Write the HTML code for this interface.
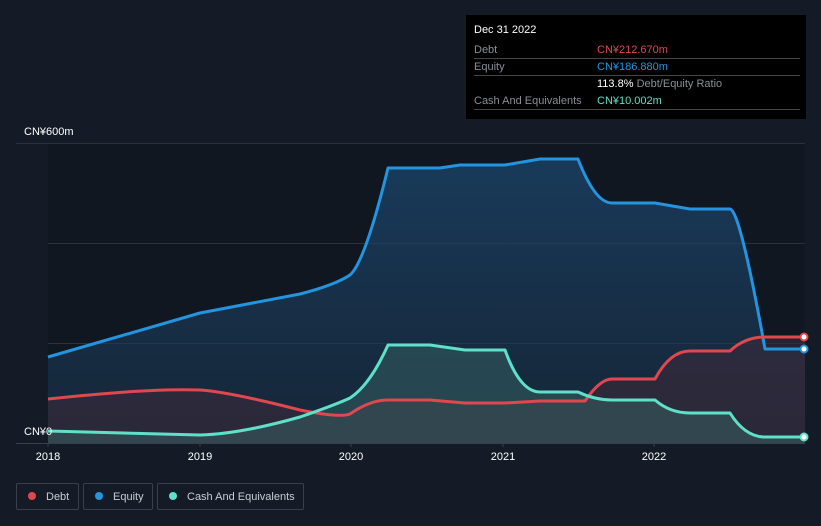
<!DOCTYPE html>
<html><head><style>
body{margin:0;width:821px;height:526px;background:#151b26;font-family:"Liberation Sans",sans-serif;overflow:hidden;position:relative}
.tt{position:absolute;left:466px;top:15px;width:340px;height:104px;background:#000;color:#fff;font-size:11px}
.tt .r{position:absolute;left:8px;right:6px;border-bottom:1px solid #444;height:17px;line-height:18px}
.l{color:#8a8e95}
.lg{position:absolute;top:483px;height:27px;border:1px solid #3a404b;border-radius:2px;color:#c8ccd2;font-size:11px;line-height:27px;box-sizing:border-box}
.dot{display:inline-block;width:8px;height:8px;border-radius:50%;margin:0 10px 0 11px;vertical-align:-0px}
</style></head><body>
<svg width="821" height="526" style="position:absolute;left:0;top:0">
<defs>
<linearGradient id="ge" x1="0" y1="0" x2="0" y2="1"><stop offset="0" stop-color="#1b4a73" stop-opacity=".7"/><stop offset="1" stop-color="#1b3550" stop-opacity=".5"/></linearGradient>
</defs>
<rect x="48" y="143" width="757" height="300" fill="#111720"/>
<g stroke="#2c323c" stroke-width="1">
<line x1="16" y1="143.5" x2="805" y2="143.5"/><line x1="48" y1="243.5" x2="805" y2="243.5"/><line x1="48" y1="343.5" x2="805" y2="343.5"/><line x1="16" y1="443.5" x2="805" y2="443.5" stroke="#3a404b"/>
</g>
<path d="M48,357 L200,313 L300,294 Q335,285 350,275 Q365,262 388,168 L440,168 L460,165 L505,165 L540,159 L578,159 Q595,203 612,203 L655,203 L690,209 L730,209 Q740,210 765,349 L805,349 L805,443 L48,443Z" fill="url(#ge)"/>
<path d="M48,399 Q150,388 200,390 Q230,392 300,410 Q340,418 350,414 Q370,400 388,400 L430,400 L465,403 L505,403 L540,401 L585,401 Q600,379 612,379 L655,379 Q670,351 690,351 L730,351 Q745,337 765,337 L805,337 L805,443 L48,443Z" fill="#3a2a3a" opacity=".6"/>
<path d="M48,431 L200,435 Q240,434 300,417 Q335,405 350,398 Q370,385 388,345 L430,345 L465,350 L505,350 Q520,392 540,392 L578,392 Q595,400 612,400 L655,400 Q670,413 690,413 L730,413 Q745,437 765,437 L805,437 L805,443 L48,443Z" fill="#3a6a68" opacity=".45"/>
<g fill="none" stroke-width="3" stroke-linejoin="round">
<path d="M48,357 L200,313 L300,294 Q335,285 350,275 Q365,262 388,168 L440,168 L460,165 L505,165 L540,159 L578,159 Q595,203 612,203 L655,203 L690,209 L730,209 Q740,210 765,349 L805,349" stroke="#2394e0"/>
<path d="M48,399 Q150,388 200,390 Q230,392 300,410 Q340,418 350,414 Q370,400 388,400 L430,400 L465,403 L505,403 L540,401 L585,401 Q600,379 612,379 L655,379 Q670,351 690,351 L730,351 Q745,337 765,337 L805,337" stroke="#e0474f"/>
<path d="M48,431 L200,435 Q240,434 300,417 Q335,405 350,398 Q370,385 388,345 L430,345 L465,350 L505,350 Q520,392 540,392 L578,392 Q595,400 612,400 L655,400 Q670,413 690,413 L730,413 Q745,437 765,437 L805,437" stroke="#5fe0c8"/>
</g>
<circle cx="804" cy="337" r="3.5" fill="#fff" stroke="#e0474f" stroke-width="2"/>
<circle cx="804" cy="349" r="3.5" fill="#fff" stroke="#2394e0" stroke-width="2"/>
<circle cx="804" cy="437" r="3.5" fill="#fff" stroke="#5fe0c8" stroke-width="2"/>
<g fill="#fff" font-size="11" font-family="Liberation Sans" text-anchor="middle">
<text x="48" y="460">2018</text><text x="200" y="460">2019</text><text x="351" y="460">2020</text><text x="503" y="460">2021</text><text x="654" y="460">2022</text>
<text x="24" y="135" text-anchor="start">CN¥600m</text><text x="24" y="435" text-anchor="start">CN¥0</text>
</g>
<g stroke="#3a404b"><line x1="48" y1="443" x2="48" y2="447"/><line x1="200" y1="443" x2="200" y2="447"/><line x1="351" y1="443" x2="351" y2="447"/><line x1="503" y1="443" x2="503" y2="447"/><line x1="654" y1="443" x2="654" y2="447"/></g>
</svg>
<div class="tt">
<div style="position:absolute;left:8px;top:9px;font-size:11px">Dec 31 2022</div>
<div class="r" style="top:26px"><span class="l">Debt</span><span style="position:absolute;left:123px;color:#e0474f">CN¥212.670m</span></div>
<div class="r" style="top:43px"><span class="l">Equity</span><span style="position:absolute;left:123px;color:#2394e0">CN¥186.880m</span></div>
<div class="r" style="top:60px;border:none"><span style="position:absolute;left:123px">113.8% <span class="l">Debt/Equity Ratio</span></span></div>
<div class="r" style="top:77px"><span class="l">Cash And Equivalents</span><span style="position:absolute;left:123px;color:#5fe0c8">CN¥10.002m</span></div>
</div>
<div class="lg" style="left:16px;width:63px"><span class="dot" style="background:#e0474f"></span>Debt</div>
<div class="lg" style="left:83px;width:70px"><span class="dot" style="background:#2394e0"></span>Equity</div>
<div class="lg" style="left:157px;width:147px"><span class="dot" style="background:#5fe0c8"></span>Cash And Equivalents</div>
</body></html>
